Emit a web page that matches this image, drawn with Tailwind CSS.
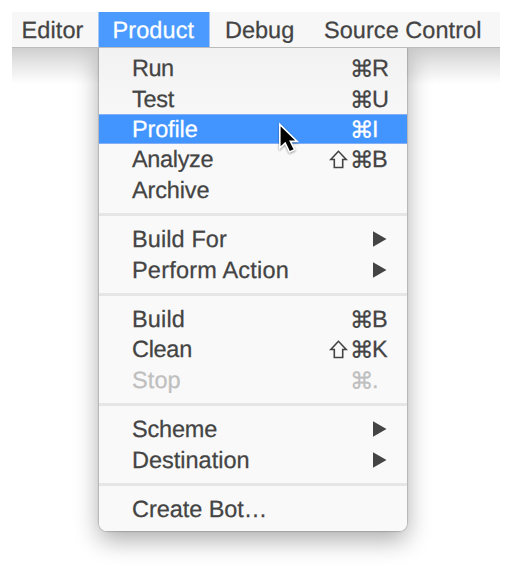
<!DOCTYPE html>
<html lang="en">
<head>
<meta charset="utf-8">
<title>Product menu</title>
<script src="https://cdn.jsdelivr.net/npm/@tailwindcss/browser@4"></script>
</head>
<body class="h-[573px] w-[512px] overflow-hidden bg-white px-3 pt-3 font-['Liberation_Sans',Arial,sans-serif] text-[23.5px] text-[#444] [-webkit-text-stroke:0.25px_currentColor] [text-rendering:geometricPrecision]">
<nav class="relative z-10 flex h-9 w-[488px] border-b border-[#bcbcbc] bg-[#f7f7f7] leading-[36px] whitespace-nowrap">
  <span class="w-[86px] pl-[9.5px] tracking-[0.1px]">Editor</span>
  <span class="h-[35px] w-28 border-x border-[#a9c6f3] bg-[#4a9aff] pl-[13.5px] tracking-[0.1px] text-white">Product</span>
  <span class="w-[99px] pl-[15px]">Debug</span>
  <span class="pl-[15px] tracking-[0.05px]">Source Control</span>
</nav>
<div class="relative h-[500px] w-[488px]">
  <div class="absolute inset-x-0 top-0 h-9 bg-linear-to-b from-[#cfcfcf] via-[#e7e7e7] via-45% to-white"></div>
  <main class="relative ml-[86.5px] h-[483px] w-[308.5px] rounded-b-[8px] bg-linear-to-b from-[#f2f2f2] to-[#f9f9f9] to-18% pt-[5.3px] leading-[30.35px] shadow-[0_0_1px_1px_rgba(0,0,0,0.16),0_9px_24px_rgba(0,0,0,0.33)]">
    <div class="flex h-[30.35px] pl-[33.5px]"><span class="w-[218px] tracking-[-0.5px]">Run</span><span class="relative top-px w-[22px] font-['DejaVu_Sans',sans-serif] text-[23.5px]">⌘</span><span>R</span></div>
    <div class="flex h-[30.35px] pl-[33.5px]"><span class="w-[218px] tracking-[-0.3px]">Test</span><span class="relative top-px w-[22px] font-['DejaVu_Sans',sans-serif] text-[23.5px]">⌘</span><span>U</span></div>
    <div class="flex h-[30.35px] border-y border-[#84aef5] bg-[#4295ff] pl-[33.5px] leading-[28.35px] text-white"><span class="w-[218px] tracking-[-0.15px]">Profile</span><span class="relative top-px w-[22px] font-['DejaVu_Sans',sans-serif] text-[23.5px]">⌘</span><span>I</span></div>
    <div class="flex h-[30.35px] pl-[33.5px]"><span class="w-[197px] tracking-[-0.35px]">Analyze</span><svg class="mt-[5.5px] mr-[2px] h-[19px] w-[19px]" viewBox="0 0 19 19" fill="none" stroke="#444" stroke-width="1.6"><path d="M9.5 1.3 1.8 9.5H5.3V17.5H13.7V9.5H17.2Z"/></svg><span class="relative top-px w-[22px] font-['DejaVu_Sans',sans-serif] text-[23.5px]">⌘</span><span>B</span></div>
    <div class="flex h-[30.35px] pl-[33.5px]"><span class="tracking-[-0.15px]">Archive</span></div>
    <div class="h-[19.2px] pt-[8px]"><div class="h-[3px] bg-[#e6e6e6]"></div></div>
    <div class="flex h-[30.35px] items-center justify-between pr-5 pl-[33.5px]"><span class="tracking-[0.1px]">Build For</span><svg class="h-4 w-[14px]" viewBox="0 0 14 16"><path d="M0 .2 13.5 8 0 15.8Z" fill="#444"/></svg></div>
    <div class="flex h-[30.35px] items-center justify-between pr-5 pl-[33.5px]"><span class="tracking-[0.2px]">Perform Action</span><svg class="h-4 w-[14px]" viewBox="0 0 14 16"><path d="M0 .2 13.5 8 0 15.8Z" fill="#444"/></svg></div>
    <div class="h-[19.2px] pt-[8px]"><div class="h-[3px] bg-[#e6e6e6]"></div></div>
    <div class="flex h-[30.35px] pl-[33.5px]"><span class="w-[218px] tracking-[0.15px]">Build</span><span class="relative top-px w-[22px] font-['DejaVu_Sans',sans-serif] text-[23.5px]">⌘</span><span>B</span></div>
    <div class="flex h-[30.35px] pl-[33.5px]"><span class="w-[197px] tracking-[-0.3px]">Clean</span><svg class="mt-[5.5px] mr-[2px] h-[19px] w-[19px]" viewBox="0 0 19 19" fill="none" stroke="#444" stroke-width="1.6"><path d="M9.5 1.3 1.8 9.5H5.3V17.5H13.7V9.5H17.2Z"/></svg><span class="relative top-px w-[22px] font-['DejaVu_Sans',sans-serif] text-[23.5px]">⌘</span><span>K</span></div>
    <div class="flex h-[30.35px] pl-[33.5px] text-[#bfbfbf]"><span class="w-[218px] tracking-[0.1px]">Stop</span><span class="relative top-px w-[22px] font-['DejaVu_Sans',sans-serif] text-[23.5px]">⌘</span><span>.</span></div>
    <div class="h-[19.2px] pt-[8px]"><div class="h-[3px] bg-[#e6e6e6]"></div></div>
    <div class="flex h-[30.35px] items-center justify-between pr-5 pl-[33.5px]"><span class="tracking-[-0.2px]">Scheme</span><svg class="h-4 w-[14px]" viewBox="0 0 14 16"><path d="M0 .2 13.5 8 0 15.8Z" fill="#444"/></svg></div>
    <div class="flex h-[30.35px] items-center justify-between pr-5 pl-[33.5px]"><span>Destination</span><svg class="h-4 w-[14px]" viewBox="0 0 14 16"><path d="M0 .2 13.5 8 0 15.8Z" fill="#444"/></svg></div>
    <div class="h-[19.2px] pt-[8px]"><div class="h-[3px] bg-[#e6e6e6]"></div></div>
    <div class="h-[30.35px] pl-[33.5px] tracking-[-0.05px]">Create Bot…</div>
    <svg class="absolute top-[73px] left-[177px] h-[34px] w-[26px] drop-shadow-[0_1px_1px_rgba(0,0,0,0.4)]" viewBox="0 0 26 34"><path d="M3.8 3.5V27.2L9.2 22 13.5 31 18.6 28.6 14.4 20.4H21.2Z" fill="#000" stroke="#fff" stroke-width="1.6"/></svg>
  </main>
</div>
</body>
</html>
